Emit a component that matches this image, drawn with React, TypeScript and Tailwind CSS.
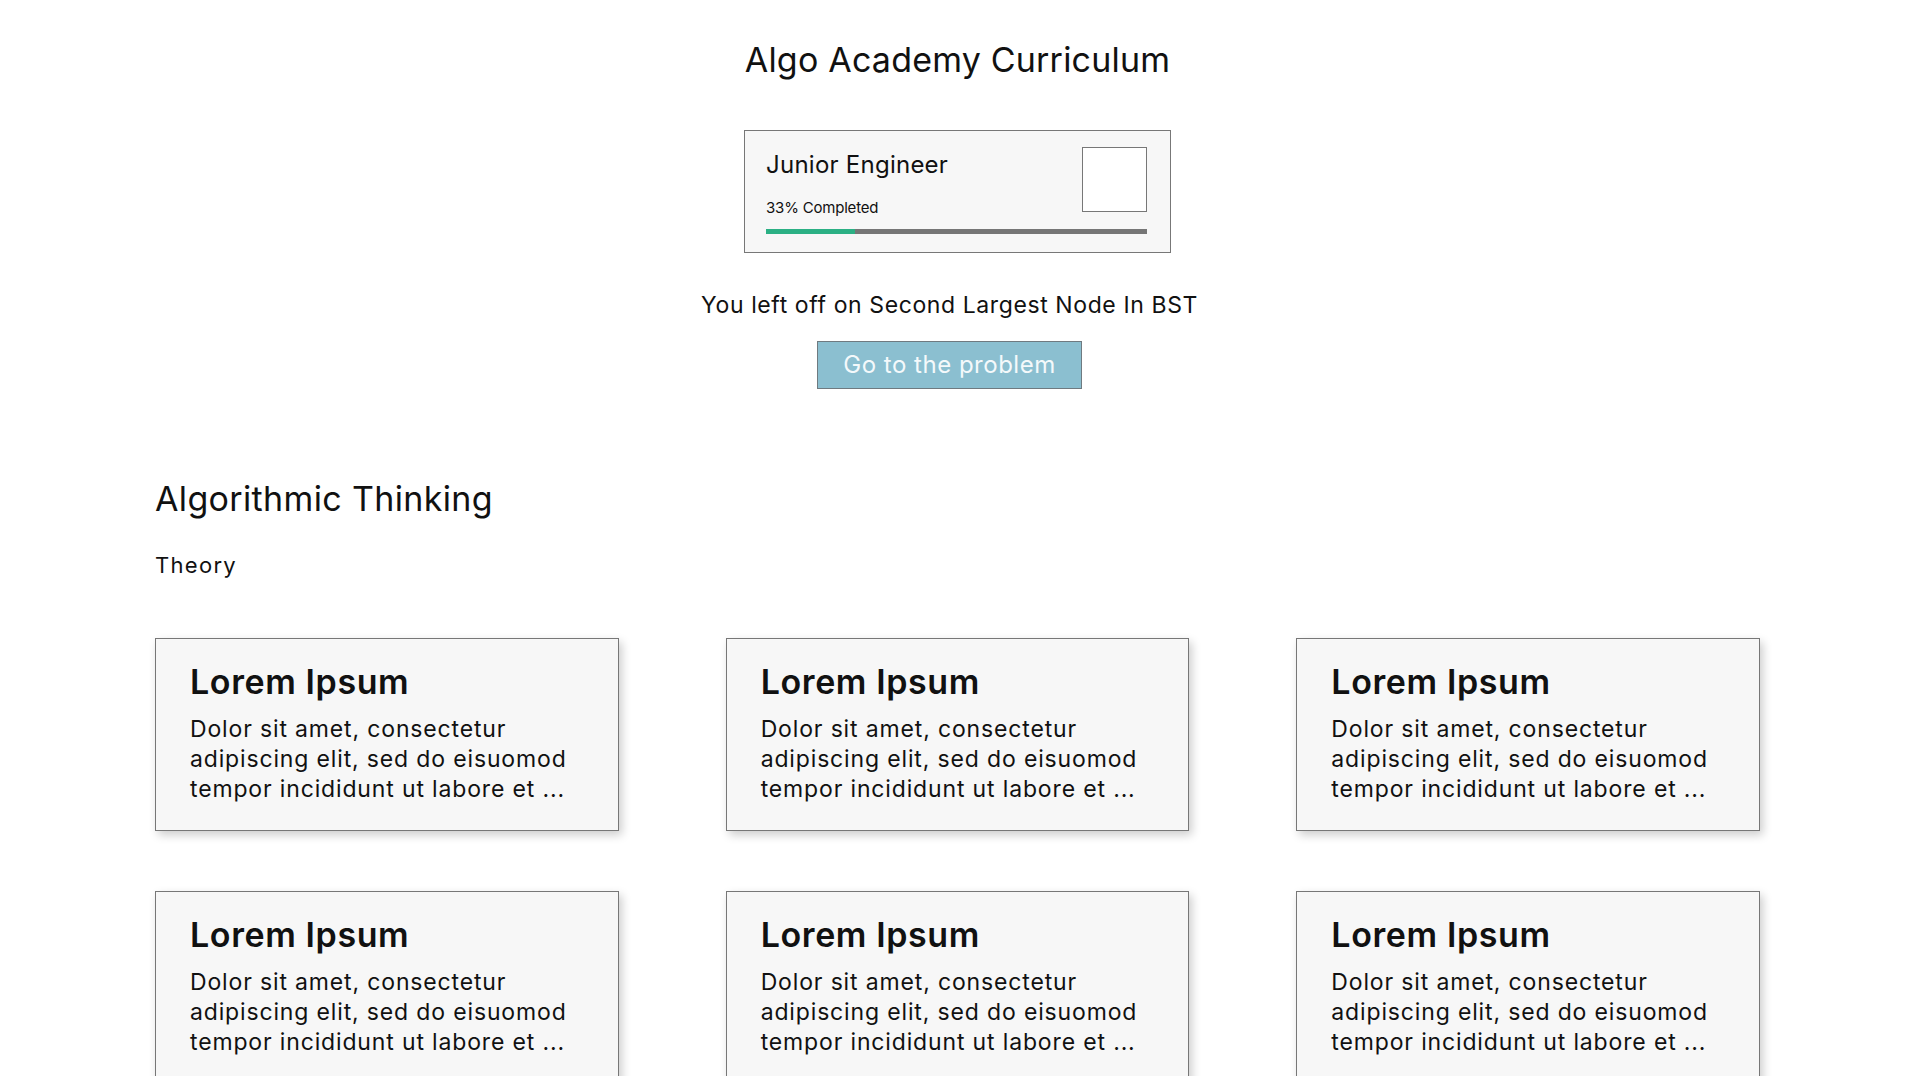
import React from "react";

const cards = Array.from({ length: 6 });

function Card() {
  return (
    <div className="bg-[#f7f7f7] border border-[#777777] shadow-[3px_4px_9px_rgba(0,0,0,0.2)] pt-[23px] pb-[26px] pl-[34px] pr-[20px]">
      <div className="text-[34px] leading-[40px] font-semibold tracking-[0.6px] text-[#111111]">Lorem Ipsum</div>
      <div className="mt-[12px] text-[23px] leading-[30px] tracking-[0.85px] text-[#111111]">
        <div>Dolor sit amet, consectetur</div>
        <div>adipiscing elit, sed do eisuomod</div>
        <div>tempor incididunt ut labore et ...</div>
      </div>
    </div>
  );
}

export default function App() {
  return (
    <div
      className="min-h-screen bg-white text-[#111111]"
      style={{ fontFamily: "Inter, 'Noto Sans', sans-serif" }}
    >
      <div className="flex flex-col items-center pt-[40px]">
        <h1 className="text-[34px] leading-[40px] font-normal tracking-[0.2px]">Algo Academy Curriculum</h1>
        <div className="mt-[50px] w-[427px] bg-[#f7f7f7] border border-[#777777] pt-[16px] pb-[18px] pl-[21px] pr-[23px]">
          <div className="flex justify-between">
            <div className="flex flex-col">
              <div className="mt-[3px] text-[24px] leading-[30px] tracking-[0.25px]">Junior Engineer</div>
              <div className="mt-[19px] text-[15px] leading-[18px] tracking-[-0.2px]">33% Completed</div>
            </div>
            <div className="w-[65px] h-[65px] bg-white border border-[#777777]" />
          </div>
          <div className="mt-[12px] h-[5px] bg-[#767676] flex">
            <div className="h-full w-[89px] bg-[#2bb084]" />
          </div>
        </div>
        <div className="flex flex-col items-center pr-[16px]">
          <p className="mt-[38px] text-[23px] leading-[28px] tracking-[0.6px]">You left off on Second Largest Node In BST</p>
          <button className="mt-[22px] w-[265px] h-[48px] bg-[#8bbfd0] border border-[#6f7a80] text-[24px] leading-[28px] tracking-[0.5px] text-[#f4f9fb]">
            Go to the problem
          </button>
        </div>
      </div>

      <div className="px-[155px] pb-[60px]">
        <h2 className="mt-[90px] text-[34px] leading-[40px] font-normal tracking-[0.35px]">Algorithmic Thinking</h2>
        <h3 className="mt-[33px] text-[22px] leading-[26px] font-normal tracking-[1.3px]">Theory</h3>
        <div className="mt-[60px] grid grid-cols-3 gap-x-[107px] gap-y-[60px]">
          {cards.map((_, i) => (
            <Card key={i} />
          ))}
        </div>
      </div>
    </div>
  );
}
